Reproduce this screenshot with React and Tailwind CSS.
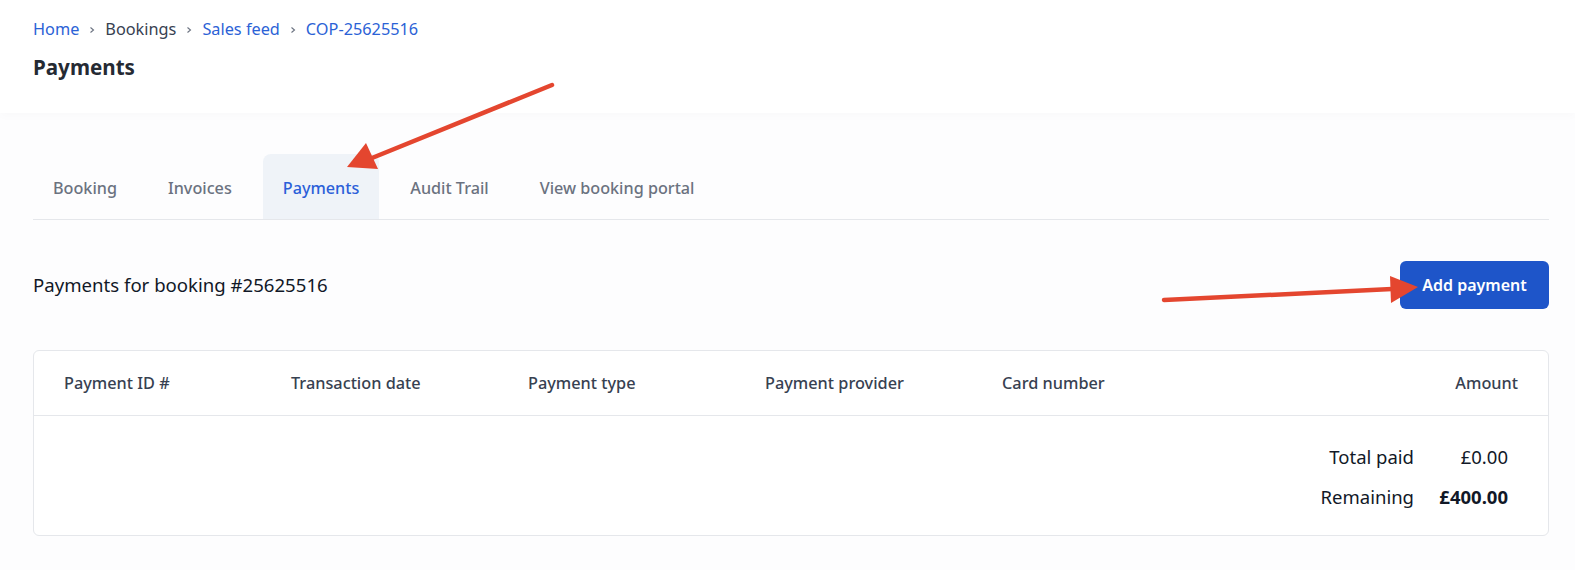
const tabs = ['Booking', 'Invoices', 'Payments', 'Audit Trail', 'View booking portal'];

const Chevron = () => (
  <svg width="8" height="8" viewBox="0 0 8 8" className="mx-[9px] mt-[2px]">
    <path d="M2.5 1.5 L5.5 4 L2.5 6.5" fill="none" stroke="#6b7280" strokeWidth="1.1" />
  </svg>
);

const Arrows = () => (
  <svg className="absolute inset-0 pointer-events-none" width="1575" height="570">
    <line x1="552" y1="85" x2="372" y2="158" stroke="#e4462f" strokeWidth="4.5" strokeLinecap="round" />
    <polygon points="347,167 366,143 378,169" fill="#e4462f" />
    <line x1="1164" y1="300" x2="1392" y2="289" stroke="#e4462f" strokeWidth="4.5" strokeLinecap="round" />
    <polygon points="1418,287 1390,276 1391,303" fill="#e4462f" />
  </svg>
);

export default function App() {
  return (
    <div className="relative w-[1575px] h-[570px] bg-[#fdfdfe] overflow-hidden" style={{ fontFamily: '"Noto Sans", sans-serif' }}>
      <header className="bg-white pl-[33px] pt-[15px] h-[113px] shadow-[0_2px_10px_rgba(0,0,0,0.025)]">
        <nav className="flex items-center text-[16.3px] leading-[28px]">
          <span className="text-[#2b62d6]">Home</span>
          <Chevron />
          <span className="text-[#374151]">Bookings</span>
          <Chevron />
          <span className="text-[#2b62d6]">Sales feed</span>
          <Chevron />
          <span className="text-[#2b62d6]">COP-25625516</span>
        </nav>
        <h1 className="mt-[10px] text-[20.6px] leading-[28px] font-bold text-[#252a33]">Payments</h1>
      </header>

      <main className="pl-[33px] pr-[26px] pt-[41px]">
        <div className="flex gap-[11px] border-b border-[#e5e7eb] h-[66px]">
          {tabs.map((t) => (
            <div
              key={t}
              className={`px-[20px] pt-[4px] flex items-center text-[16.2px] font-medium rounded-t-lg ${
                t === 'Payments' ? 'bg-[#eff3f8] text-[#2b5fd9]' : 'text-[#6b7280]'
              }`}
            >
              {t}
            </div>
          ))}
        </div>

        <div className="flex items-center justify-between mt-[41px]">
          <h2 className="text-[18.6px] leading-[28px] text-[#111827]">Payments for booking #25625516</h2>
          <button className="w-[149px] h-[48px] rounded-md bg-[#1e55c9] text-white text-[16px] font-semibold">
            Add payment
          </button>
        </div>

        <div className="mt-[41px] border border-[#e5e7eb] rounded-md bg-white">
          <div className="flex items-center h-[65px] px-[30px] border-b border-[#e5e7eb] text-[16.3px] font-medium text-[#374151]">
            <div className="w-[227px]">Payment ID #</div>
            <div className="w-[237px]">Transaction date</div>
            <div className="w-[237px]">Payment type</div>
            <div className="w-[237px]">Payment provider</div>
            <div className="w-[237px]">Card number</div>
            <div className="flex-1 text-right">Amount</div>
          </div>
          <div className="flex flex-col items-end pr-[40px] pt-[27px] pb-[24px] text-[18.5px] leading-[28px] text-[#111827] gap-[12px]">
            <div className="flex">
              <span className="text-right">Total paid</span>
              <span className="w-[94px] text-right">£0.00</span>
            </div>
            <div className="flex">
              <span className="text-right">Remaining</span>
              <span className="w-[94px] text-right font-bold">£400.00</span>
            </div>
          </div>
        </div>
      </main>

      <Arrows />
    </div>
  );
}
